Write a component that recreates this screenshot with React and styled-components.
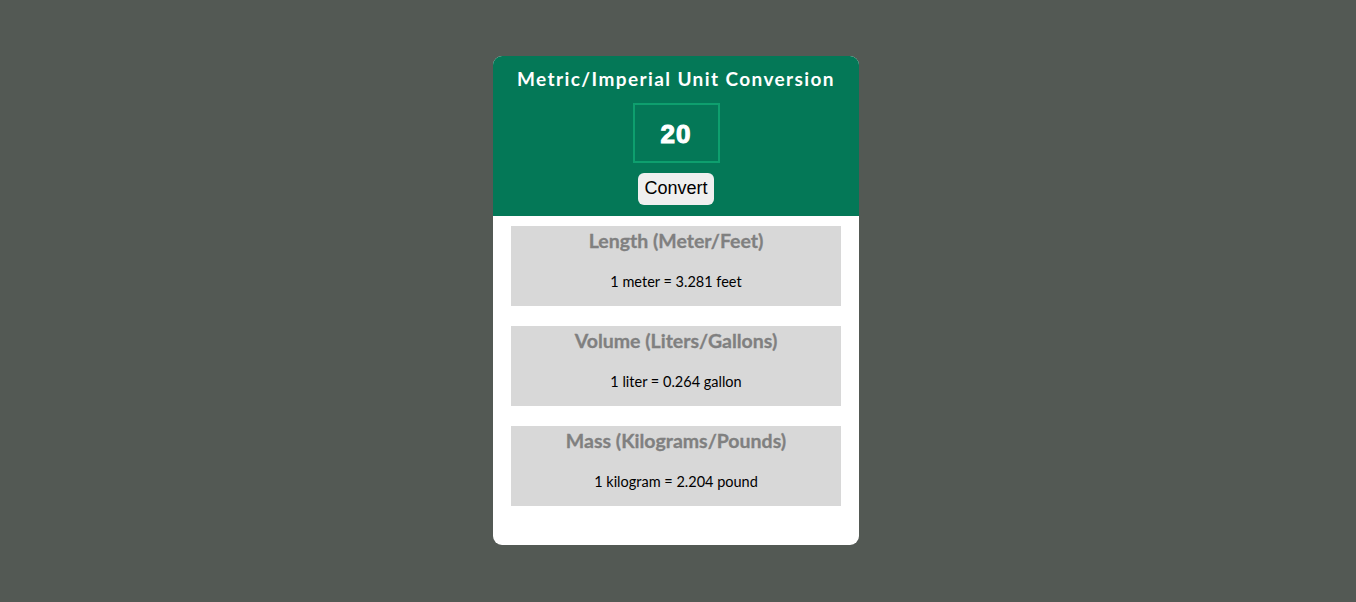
import React, { useState } from 'react'
import styled, { createGlobalStyle } from 'styled-components'

const GlobalStyle = createGlobalStyle`
	body {
		margin: 0;
		background: #535954;
		font-family: 'Lato', 'Open Sans', sans-serif;
	}
`

const conversions = [
	{ title: 'Length (Meter/Feet)', text: '1 meter = 3.281 feet' },
	{ title: 'Volume (Liters/Gallons)', text: '1 liter = 0.264 gallon' },
	{ title: 'Mass (Kilograms/Pounds)', text: '1 kilogram = 2.204 pound' },
]

const App = () => {
	const [value, setValue] = useState('20')

	return (
		<Page>
			<GlobalStyle />
			<Card>
				<Header>
					<Title>Metric/Imperial Unit Conversion</Title>
					<NumberInput value={value} onChange={e => setValue(e.target.value)} />
					<ConvertButton>Convert</ConvertButton>
				</Header>
				<Results>
					{conversions.map(item => (
						<Section key={item.title}>
							<SectionTitle>{item.title}</SectionTitle>
							<SectionText>{item.text}</SectionText>
						</Section>
					))}
				</Results>
			</Card>
		</Page>
	)
}

const Page = styled.div`
	min-height: 100vh;
	display: flex;
	justify-content: center;
	align-items: center;
	padding: 0 4px 2px 0;
	box-sizing: border-box;
`

const Card = styled.div`
	width: 366px;
	background: #ffffff;
	border-radius: 9px;
	overflow: hidden;
`

const Header = styled.div`
	background: #047857;
	height: 160px;
	box-sizing: border-box;
	padding-top: 11px;
	display: flex;
	flex-direction: column;
	align-items: center;
`

const Title = styled.h1`
	margin: 0;
	color: #ffffff;
	font-size: 19px;
	font-weight: 700;
	letter-spacing: 1.4px;
	line-height: 24px;
`

const NumberInput = styled.input`
	margin-top: 12px;
	width: 87px;
	height: 60px;
	box-sizing: border-box;
	border: 2px solid #0e9f6e;
	padding: 3px 0 0;
	background: transparent;
	color: #ffffff;
	text-align: center;
	font-family: 'Liberation Sans', Arial, sans-serif;
	font-size: 26px;
	font-weight: 900;
	outline: none;
	-webkit-text-stroke: 1.1px #ffffff;
	letter-spacing: 1px;
`

const ConvertButton = styled.button`
	margin-top: 10px;
	width: 76px;
	height: 32px;
	border: none;
	border-radius: 6px;
	background: #efefef;
	color: #000000;
	font-family: 'Liberation Sans', Arial, sans-serif;
	font-size: 18px;
	padding: 0;
`

const Results = styled.div`
	display: flex;
	flex-direction: column;
	gap: 20px;
	padding: 10px 18px 39px;
`

const Section = styled.div`
	height: 80px;
	background: #d8d8d8;
	display: flex;
	flex-direction: column;
	align-items: center;
`

const SectionTitle = styled.h2`
	margin: 3px 0 0;
	color: #808080;
	font-size: 19.5px;
	font-weight: 700;
	line-height: 24px;
	-webkit-text-stroke: 0.3px #808080;
`

const SectionText = styled.p`
	margin: 20px 0 0;
	color: #000000;
	font-size: 14.5px;
	line-height: 18px;
`

export default App
